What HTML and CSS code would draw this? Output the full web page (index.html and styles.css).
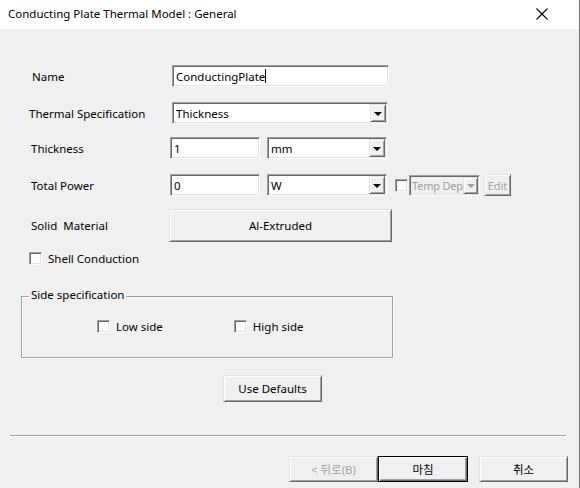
FILE: index.html
```html
<!DOCTYPE html>
<html>
<head>
<meta charset="utf-8">
<link rel="stylesheet" href="styles.css">
</head>
<body>
<div class="window">
  <div class="titlebar">
    <span class="title">Conducting Plate Thermal Model : General</span>
    <svg class="close" width="12" height="12" viewBox="0 0 12 12"><path d="M0.5 0.5 L11.5 11.5 M11.5 0.5 L0.5 11.5" stroke="#000" stroke-width="1.1" fill="none"/></svg>
  </div>
  <div class="content">
    <div class="row row-name">
      <span class="label l-name">Name</span>
      <div class="field w-name"><span class="txt">ConductingPlate</span><span class="caret"></span></div>
    </div>
    <div class="row row-spec">
      <span class="label l-spec">Thermal Specification</span>
      <div class="field select w-spec"><span class="txt">Thickness</span><span class="dd"><span class="tri"></span></span></div>
    </div>
    <div class="row row-thick">
      <span class="label l-thick">Thickness</span>
      <div class="field w-num"><span class="txt">1</span></div>
      <div class="field select w-unit"><span class="txt">mm</span><span class="dd"><span class="tri"></span></span></div>
    </div>
    <div class="row row-power">
      <span class="label l-thick">Total Power</span>
      <div class="field w-num"><span class="txt">0</span></div>
      <div class="field select w-unit"><span class="txt">W</span><span class="dd"><span class="tri"></span></span></div>
      <span class="check c-temp"></span>
      <div class="field select disabled w-temp"><span class="txt">Temp Dep</span><span class="dd"><span class="tri"></span></span></div>
      <div class="btn btn-edit disabled">Edit</div>
    </div>
    <div class="row row-mat">
      <span class="label l-mat">Solid&nbsp; Material</span>
      <div class="btn btn-mat">Al-Extruded</div>
    </div>
    <div class="row row-shell">
      <span class="check"></span><span class="clabel">Shell Conduction</span>
    </div>
    <div class="group">
      <span class="legend">Side specification</span>
      <div class="group-row">
        <span class="opt"><span class="check"></span><span class="clabel">Low side</span></span>
        <span class="opt opt-high"><span class="check"></span><span class="clabel">High side</span></span>
      </div>
    </div>
    <div class="row row-def">
      <div class="btn btn-def">Use Defaults</div>
    </div>
  </div>
  <div class="sep"></div>
  <div class="footer">
    <div class="btn btn-foot disabled">&lt; 뒤로(B)</div>
    <div class="btn btn-foot default">마침</div>
    <div class="btn btn-foot cancel">취소</div>
  </div>
</div>
</body>
</html>
```

FILE: styles.css
```css
html, body {
  margin: 0;
  padding: 0;
}
body {
  width: 580px;
  height: 488px;
  overflow: hidden;
  font-family: "Noto Sans", "Noto Sans CJK KR", sans-serif;
  font-size: 11.5px;
  color: #000;
}
.window {
  width: 579px;
  height: 488px;
  background: #f0f0f0;
  border-right: 1px solid #6f6f6f;
  display: flex;
  flex-direction: column;
}
.titlebar {
  height: 29px;
  background: #fff;
  display: flex;
  align-items: center;
  padding-left: 8px;
  padding-right: 31px;
  justify-content: space-between;
}
.title {
  font-size: 11.5px;
  position: relative;
  top: -1px;
}
.close {
  display: block;
  position: relative;
  top: -1px;
}
.content {
  height: 406px;
  position: relative;
}
.row {
  display: flex;
  align-items: center;
  height: 22px;
}
.label {
  display: inline-block;
}
.row-name { margin-top: 36px; }
.row-spec { margin-top: 15px; }
.row-thick { margin-top: 13px; }
.row-power { margin-top: 15px; }
.row-mat { margin-top: 13px; height: 32px; }
.row-shell { margin-top: 10px; height: 14px; padding-left: 29px; }

.l-name { width: 140px; padding-left: 32px; }
.l-spec { width: 143px; padding-left: 29px; }
.l-thick { width: 139px; padding-left: 31px; }
.l-mat { width: 137px; padding-left: 31px; }

.field {
  box-sizing: border-box;
  height: 22px;
  background: #fff;
  border-top: 1px solid #a0a0a0;
  border-left: 1px solid #a0a0a0;
  border-right: 1px solid #fff;
  border-bottom: 1px solid #fff;
  box-shadow: inset 1px 1px 0 #696969, inset -1px -1px 0 #e3e3e3;
  display: flex;
  align-items: center;
  padding-left: 3px;
  position: relative;
}
.txt {
  white-space: nowrap;
  position: relative;
  top: 0px;
}
.caret {
  display: inline-block;
  width: 1px;
  height: 14px;
  background: #000;
}
.w-name { width: 217px; }
.w-spec { width: 216px; height: 22px; }
.w-num { width: 90px; margin-right: 7px; }
.w-unit { width: 120px; height: 22px; }
.w-temp { width: 71px; height: 21px; margin-left: 1px; font-size: 11px; }
.w-temp .txt { letter-spacing: -0.2px; }

.select .txt { flex: 1; }
.dd {
  box-sizing: border-box;
  width: 16px;
  height: 18px;
  margin-right: 1px;
  background: #f0f0f0;
  border-top: 1px solid #e3e3e3;
  border-left: 1px solid #e3e3e3;
  border-right: 1px solid #696969;
  border-bottom: 1px solid #696969;
  box-shadow: inset 1px 1px 0 #fff, inset -1px -1px 0 #a0a0a0;
  display: flex;
  align-items: center;
  justify-content: center;
}
.tri {
  width: 0;
  height: 0;
  border-left: 4px solid transparent;
  border-right: 4px solid transparent;
  border-top: 4px solid #000;
  margin-top: 1px;
}
.disabled { color: #a0a0a0; }
.field.disabled { background: #f0f0f0; padding-left: 2px; }
.field.disabled .tri { border-top-color: #a0a0a0; }
.w-temp .dd { width: 15px; height: 17px; flex: none; }

.check {
  display: inline-block;
  box-sizing: border-box;
  width: 13px;
  height: 13px;
  background: #fff;
  border-top: 1px solid #a0a0a0;
  border-left: 1px solid #a0a0a0;
  border-right: 1px solid #fff;
  border-bottom: 1px solid #fff;
  box-shadow: inset 1px 1px 0 #696969, inset -1px -1px 0 #e3e3e3;
  flex: none;
}
.c-temp { margin-left: 8px; }
.clabel { margin-left: 6px; }

.btn {
  box-sizing: border-box;
  background: #f0f0f0;
  border-top: 1px solid #e3e3e3;
  border-left: 1px solid #e3e3e3;
  border-right: 1px solid #696969;
  border-bottom: 1px solid #696969;
  box-shadow: inset 1px 1px 0 #fff, inset -1px -1px 0 #a0a0a0;
  display: flex;
  align-items: center;
  justify-content: center;
  white-space: nowrap;
}
.btn-edit { width: 27px; height: 22px; margin-left: 4px; font-size: 11px; color: #a0a0a0; }
.btn-mat { width: 223px; height: 33px; margin-left: 1px; }

.group {
  position: relative;
  box-sizing: border-box;
  margin-top: 31px;
  margin-left: 21px;
  width: 372px;
  height: 62px;
  border: 1px solid #a0a0a0;
  box-shadow: inset 1px 1px 0 #fff, 1px 1px 0 #fff;
}
.legend {
  position: absolute;
  left: 7px;
  top: -10px;
  padding: 0 2px 0 2px;
  background: #f0f0f0;
}
.group-row {
  display: flex;
  align-items: center;
  padding-left: 75px;
  margin-top: 22px;
}
.opt { display: flex; align-items: center; }
.opt-high { margin-left: 71px; }

.row-def { margin-top: 17px; height: 27px; padding-left: 223px; }
.btn-def { width: 99px; height: 27px; }

.sep {
  margin-left: 10px;
  width: 556px;
  height: 1px;
  background: #a0a0a0;
  border-bottom: 1px solid #fff;
}
.footer {
  display: flex;
  margin-top: 19px;
  padding-left: 289px;
}
.btn-foot { width: 89px; height: 26px; }
.default {
  border: 1px solid #000;
  box-shadow: inset 1px 1px 0 #fff, inset -1px -1px 0 #696969, inset -2px -2px 0 #a0a0a0;
  width: 90px;
}
.cancel { margin-left: 11px; }
```
